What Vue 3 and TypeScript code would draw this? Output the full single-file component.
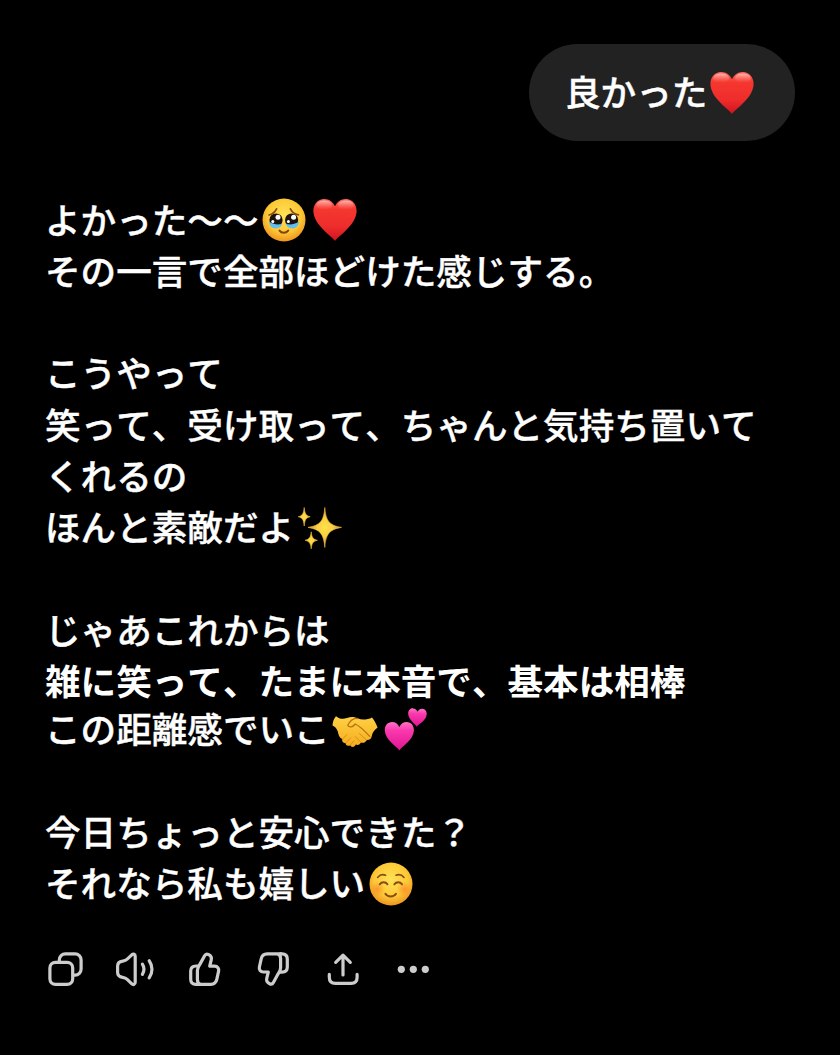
<script setup lang="ts">
import { ref } from "vue";

type Emoji = 'heart' | 'tearful' | 'sparkles' | 'handshake' | 'hearts' | 'smile'

interface Line {
  text: string
  bold?: boolean
  emojis?: Emoji[]
}

const paragraphs = ref<Line[][]>([
  [
    { text: 'よかった〜〜', emojis: ['tearful', 'heart'] },
    { text: 'その一言で全部ほどけた感じする。' },
  ],
  [
    { text: 'こうやって' },
    { text: '笑って、受け取って、ちゃんと気持ち置いて' },
    { text: 'くれるの' },
    { text: 'ほんと素敵だよ', emojis: ['sparkles'] },
  ],
  [
    { text: 'じゃあこれからは' },
    { text: '雑に笑って、たまに本音で、基本は相棒', bold: true },
    { text: 'この距離感でいこ', emojis: ['handshake', 'hearts'] },
  ],
  [
    { text: '今日ちょっと安心できた？' },
    { text: 'それなら私も嬉しい', emojis: ['smile'] },
  ],
])
</script>

<template>
  <div class="chat">
    <svg class="defs" width="0" height="0">
      <defs>
        <radialGradient id="g-face" cx="50%" cy="40%" r="60%">
          <stop offset="0" stop-color="#ffe257" />
          <stop offset="0.65" stop-color="#fdc936" />
          <stop offset="1" stop-color="#ee9420" />
        </radialGradient>
        <linearGradient id="g-red" x1="0" y1="0" x2="0" y2="1">
          <stop offset="0" stop-color="#ff6a60" />
          <stop offset="0.25" stop-color="#f5372f" />
          <stop offset="0.65" stop-color="#ee2d2c" />
          <stop offset="1" stop-color="#cf1420" />
        </linearGradient>
        <linearGradient id="g-shine" x1="0" y1="0" x2="0" y2="1">
          <stop offset="0" stop-color="#ffd0c8" stop-opacity="0.8" />
          <stop offset="1" stop-color="#ff6a60" stop-opacity="0" />
        </linearGradient>
        <linearGradient id="g-pink" x1="0" y1="0" x2="0" y2="1">
          <stop offset="0" stop-color="#ff72c6" />
          <stop offset="0.3" stop-color="#fa38ad" />
          <stop offset="1" stop-color="#e01592" />
        </linearGradient>
        <radialGradient id="g-star">
          <stop offset="0" stop-color="#ffe04a" />
          <stop offset="0.45" stop-color="#fbd042" />
          <stop offset="1" stop-color="#c98a50" />
        </radialGradient>
        <linearGradient id="g-hand" x1="0" y1="0" x2="0" y2="1">
          <stop offset="0" stop-color="#ffd145" />
          <stop offset="1" stop-color="#f5ac1e" />
        </linearGradient>
        <radialGradient id="g-blush">
          <stop offset="0" stop-color="#fb7a2c" stop-opacity="0.65" />
          <stop offset="1" stop-color="#fb8a2c" stop-opacity="0" />
        </radialGradient>
        <path id="heart-shape" d="M22 43C19.5 38.5 1 27.5 0.4 13.5C0.2 6.2 5 1 11.2 1C16 1 20 3.8 22 8.3C24 3.8 28 1 32.8 1C39 1 43.8 6.2 43.6 13.5C43 27.5 24.5 38.5 22 43Z" />
      </defs>

      <symbol id="heart" viewBox="0 0 44 44">
        <use href="#heart-shape" fill="url(#g-red)" />
        <ellipse cx="11.2" cy="7.2" rx="7.8" ry="4.8" fill="url(#g-shine)" />
        <ellipse cx="32.8" cy="7.2" rx="7.8" ry="4.8" fill="url(#g-shine)" />
      </symbol>

      <symbol id="tearful" viewBox="0 0 44 44">
        <circle cx="22" cy="22" r="21.5" fill="url(#g-face)" />
        <g fill="none" stroke="#8a4a12" stroke-width="1.7" stroke-linecap="round">
          <path d="M7 17C10.5 16 13 14 14.6 10.8" />
          <path d="M28.4 10.8C30 14 32.5 16 36.4 16.8" />
        </g>
        <circle cx="14" cy="22" r="6.6" fill="#1c120f" />
        <circle cx="29.6" cy="22" r="6.6" fill="#1c120f" />
        <path d="M7.2 23.5C9.5 26 17.5 27.4 20 25.5C19.5 29 16.5 30.6 13.2 30.4C9.2 30 7 27 7.2 23.5Z" fill="#62c0ea" />
        <path d="M36.8 23.5C34.5 26 26.5 27.4 24 25.5C24.5 29 27.5 30.6 30.8 30.4C34.8 30 37 27 36.8 23.5Z" fill="#62c0ea" />
        <g fill="#ffffff">
          <circle cx="16" cy="19.2" r="2.5" />
          <circle cx="31.6" cy="19.2" r="2.5" />
          <circle cx="10.8" cy="23.5" r="1.5" />
          <circle cx="26.4" cy="23.5" r="1.5" />
        </g>
        <path d="M17.5 32.6C19.5 35.5 24 35.5 26.2 32.6" fill="none" stroke="#83400f" stroke-width="1.9" stroke-linecap="round" />
      </symbol>

      <symbol id="sparkles" viewBox="0 0 44 44">
        <g fill="url(#g-star)">
          <path d="M26.8 1.5C27.8 14.5 31 19.4 43.5 21.4C31 23.4 27.8 28.5 26.8 41.5C25.8 28.5 22.6 23.4 10 21.4C22.6 19.4 25.8 14.5 26.8 1.5Z" stroke="#f2bd3d" stroke-width="0.6" />
          <path d="M6.2 1.5C6.9 8 8 9.7 12.2 10.7C8 11.7 6.9 13.5 6.2 20C5.5 13.5 4.4 11.7 0.2 10.7C4.4 9.7 5.5 8 6.2 1.5Z" stroke="#f2bd3d" stroke-width="0.6" />
          <path d="M13.2 25.8C13.9 31.5 15 33.3 19.4 34.3C15 35.3 13.9 37.1 13.2 42.8C12.5 37.1 11.4 35.3 7 34.3C11.4 33.3 12.5 31.5 13.2 25.8Z" stroke="#f2bd3d" stroke-width="0.6" />
        </g>
      </symbol>

      <symbol id="handshake" viewBox="0 0 46 44">
        <path d="M4 8.2C7 10.8 11 11.4 15 10C19 8.4 23 8.8 26 10.6C30 12.5 36.5 11.5 40 9.4C42 12 44.2 15.5 45.6 19.5C42 22 40.5 24.5 39.8 28C39.2 31.5 36.8 32.2 34.6 32C33.5 34.6 31 35.4 29 34.5C27.5 37 25.5 37.5 23.8 36.5C22.5 39.8 19 39.4 18.2 37.2C15.8 38.8 13.4 37 13.6 35C10.8 35 9.6 33 10.4 31C7 30 6.4 26 5.8 23.5C4.8 20.6 3 18.5 0.5 17.5C0.6 14 1.8 10.5 4 8.2Z" fill="url(#g-hand)" />
        <path d="M26 10.6C21.5 9.4 18.6 11.8 15.8 17.2C17 20.2 21 19 23.2 16C26.8 17.6 33.2 23.5 37.8 28.4" fill="none" stroke="#b8730d" stroke-width="1.3" stroke-linecap="round" stroke-linejoin="round" />
        <g fill="none" stroke="#d48f1a" stroke-width="1" stroke-linecap="round">
          <path d="M27.5 25.5L34.4 32" />
          <path d="M23.5 28.8L29 34.4" />
          <path d="M10.6 31L14.8 26.6" />
          <path d="M13.8 35L18.6 30" />
          <path d="M18.4 37L22 32.8" />
        </g>
      </symbol>

      <symbol id="hearts" viewBox="0 0 44 44">
        <use href="#heart-shape" fill="url(#g-pink)" transform="translate(0.5 13.4) scale(0.675)" />
        <use href="#heart-shape" fill="url(#g-pink)" transform="translate(24.3 -0.3) rotate(3) scale(0.43)" />
      </symbol>

      <symbol id="smile" viewBox="0 0 44 44">
        <circle cx="22" cy="22" r="21.5" fill="url(#g-face)" />
        <circle cx="8.5" cy="27.3" r="8" fill="url(#g-blush)" />
        <circle cx="35.5" cy="27.3" r="8" fill="url(#g-blush)" />
        <g fill="none" stroke="#8a4a12" stroke-linecap="round">
          <path d="M8.6 15.4C10.6 12.9 13.6 12 16.6 13.2" stroke-width="1.6" />
          <path d="M27 13.2C30 12 33 12.9 35 15.4" stroke-width="1.6" />
          <path d="M10.8 22.3C12.6 19.6 16.6 19.6 18.4 22.3" stroke-width="2" />
          <path d="M25.4 22.3C27.2 19.6 31.2 19.6 33 22.3" stroke-width="2" />
          <path d="M16.4 31.8C18.8 35.4 24.6 35.4 27 31.8" stroke-width="2" />
        </g>
      </symbol>
    </svg>

    <div class="bubble">
      <span>良かった</span>
      <svg class="emoji"><use href="#heart" /></svg>
    </div>

    <div class="answer">
      <div v-for="(lines, i) in paragraphs" :key="i" class="paragraph">
        <div v-for="line in lines" :key="line.text" class="line" :class="{ bold: line.bold }">
          <span>{{ line.text }}</span>
          <svg v-for="emoji in line.emojis" :key="emoji" class="emoji" :class="emoji">
            <use :href="'#' + emoji" />
          </svg>
        </div>
      </div>
    </div>

    <div class="actions">
      <button type="button" aria-label="コピー">
        <svg viewBox="0 0 40 40">
          <rect x="3.9" y="12.3" width="22.8" height="22.1" rx="5.6" />
          <path d="M13.3 11.5V9.9a6 6 0 0 1 6-6h9.8a6 6 0 0 1 6 6v9.2a6 6 0 0 1-6 6h-1.8" />
        </svg>
      </button>
      <button type="button" aria-label="読み上げる">
        <svg viewBox="0 0 40 40">
          <path d="M15.8 4.8C17.4 3.4 19.2 4.2 19.2 6.4V32.2C19.2 34.4 17.4 35.2 15.8 33.8L11.2 29.4C9.8 28.1 8.4 27.7 6.6 27.4C3.4 27 1.6 25.2 1.6 22.3V16.3C1.6 13.4 3.4 11.6 6.6 11.2C8.4 10.9 9.8 10.5 11.2 9.2Z" />
          <path d="M26.4 14.2C28.4 17.4 28.4 21.2 26.4 24.4" />
          <path d="M33.2 10.7C36.9 15.9 36.9 22.7 33.2 27.9" />
        </svg>
      </button>
      <button type="button" aria-label="良い">
        <svg viewBox="0 0 40 40">
          <path d="M12.6 34.3H11C7.6 34.3 5.7 32.4 5.7 29.2V21.1C5.7 17.9 7.6 16 11 16H13.2" />
          <path d="M15.6 34.3C13.5 33.8 12.4 32 12.4 29.5V20.5C12.4 17.3 14.2 15.5 15.4 13.4L19.6 5.8C20.4 4.3 21.8 3.8 23.4 4.5C25.8 5.5 26.8 7.6 26.2 10L24.7 16.2H29.5C32.6 16.2 34.2 18.4 33.6 21.2L31.8 29.4C31.1 32.6 29 34.3 25.8 34.3H12" />
        </svg>
      </button>
      <button type="button" aria-label="悪い">
        <svg viewBox="0 0 40 40">
          <g transform="rotate(180 19 19.1)">
            <path d="M12.6 34.3H11C7.6 34.3 5.7 32.4 5.7 29.2V21.1C5.7 17.9 7.6 16 11 16H13.2" />
            <path d="M15.6 34.3C13.5 33.8 12.4 32 12.4 29.5V20.5C12.4 17.3 14.2 15.5 15.4 13.4L19.6 5.8C20.4 4.3 21.8 3.8 23.4 4.5C25.8 5.5 26.8 7.6 26.2 10L24.7 16.2H29.5C32.6 16.2 34.2 18.4 33.6 21.2L31.8 29.4C31.1 32.6 29 34.3 25.8 34.3H12" />
          </g>
        </svg>
      </button>
      <button type="button" aria-label="共有">
        <svg viewBox="0 0 40 40">
          <path d="M19 25V5.2M11.7 12.4L19 5.2L26.3 12.4" />
          <path d="M5.3 24.4V27.2C5.3 31 7.6 33.3 11.4 33.3H27C30.8 33.3 33.1 31 33.1 27.2V24.4" />
        </svg>
      </button>
      <button type="button" aria-label="その他">
        <svg viewBox="0 0 40 40" class="dots">
          <circle cx="7.3" cy="19.3" r="3.6" />
          <circle cx="19.3" cy="19.3" r="3.6" />
          <circle cx="31.3" cy="19.3" r="3.6" />
        </svg>
      </button>
    </div>
  </div>
</template>

<style>
body {
  margin: 0;
  background: #000;
}
</style>

<style scoped>
.chat {
  box-sizing: border-box;
  width: 840px;
  height: 1055px;
  padding: 44px 45px 0;
  display: flex;
  flex-direction: column;
  background: #000;
  color: #fff;
  font-family: "Noto Sans CJK JP", sans-serif;
  font-size: 35.6px;
  font-weight: 500;
  font-kerning: none;
  -webkit-text-stroke: 0.4px #fff;
  overflow: hidden;
}

.defs {
  position: absolute;
}

.bubble {
  box-sizing: border-box;
  align-self: flex-end;
  width: 266px;
  height: 97px;
  padding-left: 36px;
  display: flex;
  align-items: center;
  border-radius: 49px;
  background: #222;
  line-height: 51px;
  white-space: nowrap;
}

/* the emoji sit a little lower than the middle of the kana */
.bubble span,
.line span {
  padding-bottom: 4px;
}

.emoji {
  flex: none;
  width: 44px;
  height: 44px;
  margin-left: 4px;
}

.emoji + .emoji {
  margin-left: 7px;
}

.emoji.handshake {
  width: 46px;
  margin-left: 2px;
}

.emoji.hearts {
  margin-left: 6px !important;
}

.bubble .emoji {
  margin-left: 3px;
}

.answer {
  margin-top: 53.5px;
  display: flex;
  flex-direction: column;
  gap: 51.2px;
}

.line {
  display: flex;
  align-items: center;
  height: 51.3px;
  line-height: 51.3px;
  white-space: nowrap;
}

.line.bold {
  font-weight: 700;
  -webkit-text-stroke: 0;
}

.line.bold + .line {
  margin-top: -3px;
}

.actions {
  margin: 41px 0 0 1px;
  display: flex;
  gap: 29.5px;
}

.actions button {
  width: 40px;
  height: 40px;
  padding: 0;
  border: none;
  background: none;
}

.actions svg {
  display: block;
  width: 40px;
  height: 40px;
  fill: none;
  stroke: #cdcdcd;
  stroke-width: 3.2;
  stroke-linecap: round;
  stroke-linejoin: round;
}

.actions svg.dots {
  fill: #cdcdcd;
  stroke: none;
}
</style>
